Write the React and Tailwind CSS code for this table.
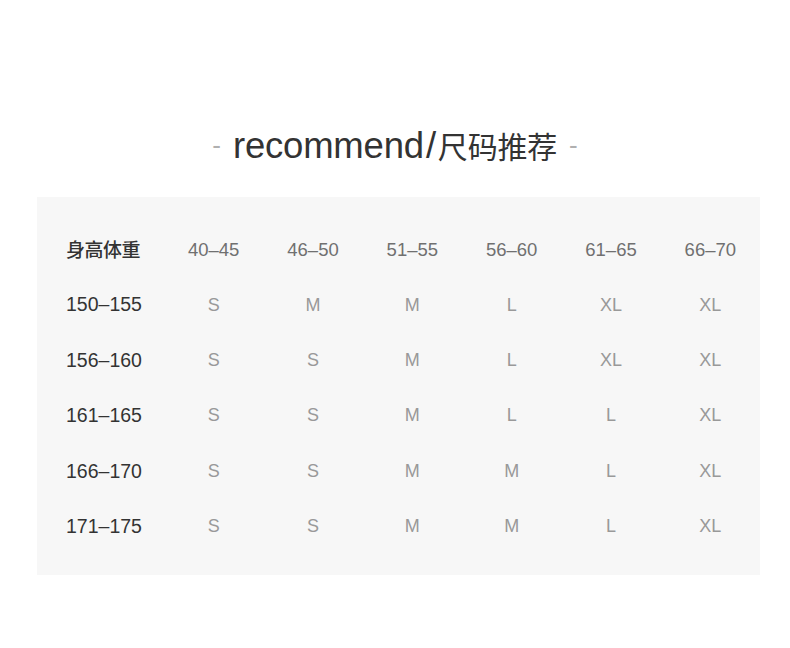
import React from 'react';

const weights = ['40–45', '46–50', '51–55', '56–60', '61–65', '66–70'];

const rows = [
    { height: '150–155', sizes: ['S', 'M', 'M', 'L', 'XL', 'XL'] },
    { height: '156–160', sizes: ['S', 'S', 'M', 'L', 'XL', 'XL'] },
    { height: '161–165', sizes: ['S', 'S', 'M', 'L', 'L', 'XL'] },
    { height: '166–170', sizes: ['S', 'S', 'M', 'M', 'L', 'XL'] },
    { height: '171–175', sizes: ['S', 'S', 'M', 'M', 'L', 'XL'] },
];

const App = () => {
    return (
        <div className="w-[790px] h-[648px] bg-white font-['Liberation_Sans','Noto_Sans_CJK_SC',sans-serif]">
            {/* Title */}
            <div className="pt-[128px] flex justify-center items-center h-[162px]">
                <span className="text-[#b0b0b0] text-[26px] leading-none mr-[12px] font-light">-</span>
                <h1 className="text-[36.5px] leading-[34px] text-[#333] tracking-[-0.2px]">
                    recommend<span className="mx-[2px]">/</span><span className="text-[30px] font-['Noto_Sans_CJK_SC',sans-serif]">尺码推荐</span>
                </h1>
                <span className="text-[#b0b0b0] text-[26px] leading-none ml-[12px] font-light">-</span>
            </div>

            {/* Size table */}
            <div className="ml-[37px] w-[723px] h-[378px] mt-[35px] bg-[#f7f7f7] pl-[29px] pt-[25px]">
                <div className="grid grid-cols-[98px_repeat(6,1fr)] auto-rows-[55.4px] items-center">
                    <div className="text-[19px] font-medium text-[#333] font-['Noto_Sans_CJK_SC',sans-serif] tracking-[-0.5px]">身高体重</div>
                    {weights.map(w => (
                        <div key={w} className="text-center text-[18.5px] text-[#707070]">{w}</div>
                    ))}
                    {rows.map(row => (
                        <React.Fragment key={row.height}>
                            <div className="text-[19.5px] text-[#333]">{row.height}</div>
                            {row.sizes.map((s, i) => (
                                <div key={i} className="text-center text-[18px] text-[#999]">{s}</div>
                            ))}
                        </React.Fragment>
                    ))}
                </div>
            </div>
        </div>
    );
};

export default App;
